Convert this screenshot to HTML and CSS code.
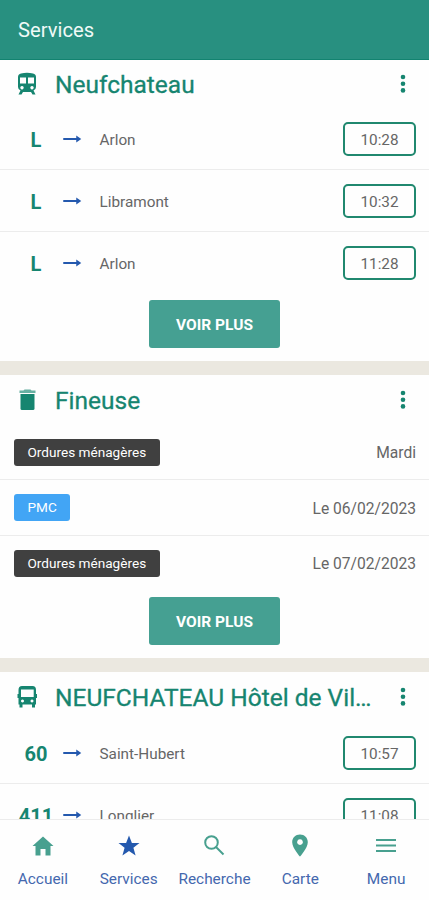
FILE: index.html
```html
<!DOCTYPE html>
<html lang="fr">
<head>
    <meta charset="UTF-8">
    <meta name="viewport" content="width=device-width, initial-scale=1.0">
    <title>Services</title>
    <link rel="stylesheet" href="styles.css">
</head>
<body>
    <!-- Header -->
    <header class="header">
        <h1>Services</h1>
    </header>

    <!-- Main Content -->
    <main class="main-content">
        <!-- Train -->
        <section class="card">
            <div class="card-header">
                <svg class="card-icon" viewBox="0 0 20 24"><path fill-rule="evenodd" d="M4 1.500Q10 0 16 1.500Q19 2 19 5V15Q19 17.500 16.500 18.500L18.500 22.500H15.500L14 20H6L4.500 22.500H1.500L3.500 18.500Q1 17.500 1 15V5Q1 2 4 1.500ZM3 5.500V11.500H9V5.500ZM11 5.500V11.500H17V5.500ZM5 14a1.700 1.700 0 1 0 .01 0ZM15 14a1.700 1.700 0 1 0 .01 0Z"/></svg>
                <h2>Neufchateau</h2>
                <svg class="more" viewBox="0 0 6 20"><circle cx="3" cy="3" r="2.300"/><circle cx="3" cy="9.700" r="2.300"/><circle cx="3" cy="16.400" r="2.300"/></svg>
            </div>
            <div class="row">
                <span class="line">L</span>
                <svg class="arrow" viewBox="0 0 18 8"><path d="M0 3H13V.5L18 4L13 7.500V5H0Z"/></svg>
                <span class="stop">Arlon</span>
                <span class="time">10:28</span>
            </div>
            <div class="row">
                <span class="line">L</span>
                <svg class="arrow" viewBox="0 0 18 8"><path d="M0 3H13V.5L18 4L13 7.500V5H0Z"/></svg>
                <span class="stop">Libramont</span>
                <span class="time">10:32</span>
            </div>
            <div class="row">
                <span class="line">L</span>
                <svg class="arrow" viewBox="0 0 18 8"><path d="M0 3H13V.5L18 4L13 7.500V5H0Z"/></svg>
                <span class="stop">Arlon</span>
                <span class="time">11:28</span>
            </div>
            <button class="btn">VOIR PLUS</button>
        </section>

        <!-- Waste collection -->
        <section class="card">
            <div class="card-header">
                <svg class="card-icon" viewBox="0 0 20 24"><path d="M3.500 6H17.500V20.500Q17.500 22 16 22H5Q3.500 22 3.500 20.500Z"/><path class="lid" d="M2.500 2.500H6.500L7.500 1.500H13.500L14.500 2.500H18.500V5H2.500Z"/></svg>
                <h2>Fineuse</h2>
                <svg class="more" viewBox="0 0 6 20"><circle cx="3" cy="3" r="2.300"/><circle cx="3" cy="9.700" r="2.300"/><circle cx="3" cy="16.400" r="2.300"/></svg>
            </div>
            <div class="row waste">
                <span class="badge">Ordures ménagères</span>
                <span class="date">Mardi</span>
            </div>
            <div class="row waste">
                <span class="badge blue">PMC</span>
                <span class="date">Le 06/02/2023</span>
            </div>
            <div class="row waste">
                <span class="badge">Ordures ménagères</span>
                <span class="date">Le 07/02/2023</span>
            </div>
            <button class="btn">VOIR PLUS</button>
        </section>

        <!-- Bus -->
        <section class="card">
            <div class="card-header">
                <svg class="card-icon" viewBox="0 0 20 24"><path fill-rule="evenodd" d="M5 1H15.500Q19 1 19 5V9H20V13H19V19.500H18V22.500H15V19.500H5.500V22.500H2.500V19.500H1.500V13H.5V9H1.500V5Q1.500 1 5 1ZM4 4.500V12H16.700V4.500ZM5.500 14.500a1.500 1.500 0 1 0 .01 0ZM15 14.500a1.500 1.500 0 1 0 .01 0Z"/></svg>
                <h2>NEUFCHATEAU Hôtel de Ville</h2>
                <svg class="more" viewBox="0 0 6 20"><circle cx="3" cy="3" r="2.300"/><circle cx="3" cy="9.700" r="2.300"/><circle cx="3" cy="16.400" r="2.300"/></svg>
            </div>
            <div class="row">
                <span class="line">60</span>
                <svg class="arrow" viewBox="0 0 18 8"><path d="M0 3H13V.5L18 4L13 7.500V5H0Z"/></svg>
                <span class="stop">Saint-Hubert</span>
                <span class="time">10:57</span>
            </div>
            <div class="row">
                <span class="line">411</span>
                <svg class="arrow" viewBox="0 0 18 8"><path d="M0 3H13V.5L18 4L13 7.500V5H0Z"/></svg>
                <span class="stop">Longlier</span>
                <span class="time">11:08</span>
            </div>
        </section>
    </main>

    <!-- Bottom Navigation -->
    <nav class="bottom-nav">
        <a class="nav-item">
            <svg viewBox="0 0 24 24"><path d="M12 2.500L22.500 12H19.500V21.500H14.500V15H9.500V21.500H4.500V12H1.500Z"/></svg>
            <span>Accueil</span>
        </a>
        <a class="nav-item active">
            <svg viewBox="0 0 24 24"><path d="M12 1.500L14.900 9H22.500L16.400 13.700L18.600 21.500L12 17L5.400 21.500L7.600 13.700L1.500 9H9.100Z"/></svg>
            <span>Services</span>
        </a>
        <a class="nav-item">
            <svg viewBox="0 0 24 24"><g class="stroke"><circle cx="9.500" cy="8.500" r="6.300"/><path d="M14 13L21.500 20.500"/></g></svg>
            <span>Recherche</span>
        </a>
        <a class="nav-item">
            <svg viewBox="0 0 24 24"><path fill-rule="evenodd" d="M12 .5C7.500 .5 4.200 3.800 4.200 8.200C4.200 14 12 22.500 12 22.500S19.800 14 19.800 8.200C19.800 3.800 16.500 .5 12 .5ZM12 5.200a2.900 2.900 0 1 0 .01 0Z"/></svg>
            <span>Carte</span>
        </a>
        <a class="nav-item">
            <svg viewBox="0 0 24 24"><g class="stroke"><path d="M2 6H22M2 11.500H22M2 17H22"/></g></svg>
            <span>Menu</span>
        </a>
    </nav>
</body>
</html>
```
FILE: styles.css
```css
/* Global Styles */
* {
    box-sizing: border-box;
    margin: 0;
    padding: 0;
    font-family: Roboto, sans-serif;
}
body {
    display: flex;
    flex-direction: column;
    height: 100vh;
    overflow: hidden;
    background-color: #fff;
}

/* Header */
.header {
    flex: none;
    display: flex;
    align-items: center;
    height: 60px;
    padding: 0 18px;
    background-color: #289080;
    border-bottom: 1px solid #128370;
    color: #f0faf7;
}
.header h1 {
    font-size: 20.200px;
    font-weight: 400;
}

/* Main Content */
.main-content {
    flex: 1;
    min-height: 0;
    overflow: hidden;
    display: flex;
    flex-direction: column;
    gap: 14px;
    background-color: #ebe8e0;
}
.card {
    flex: none;
    display: flex;
    flex-direction: column;
    padding-bottom: 13px;
    background-color: #fefefe;
}
.card-header {
    display: flex;
    align-items: center;
    height: 50px;
    padding: 0 23px 0 17px;
    color: #168570;
    fill: #168570;
}
.card:first-child .card-header {
    height: 48px;
}
.card-icon {
    flex: none;
    width: 20px;
    height: 24px;
    margin-right: 18px;
}
.lid {
    opacity: 0.65;
}
.card-header h2 {
    flex: 1;
    padding-top: 1px;
    margin-right: 27px;
    font-size: 24.500px;
    font-weight: 400;
    white-space: nowrap;
    overflow: hidden;
    text-overflow: ellipsis;
    -webkit-text-stroke: 0.3px #168570;
}
.more {
    flex: none;
    width: 6px;
    height: 20px;
}

/* Rows */
.row {
    display: flex;
    align-items: center;
    height: 62px;
    padding: 0 13px;
    border-bottom: 1px solid #ececec;
    color: #666;
    font-size: 15.300px;
}
.row:nth-child(4) {
    border-bottom: none;
}
.line {
    width: 46px;
    padding-top: 2px;
    text-align: center;
    color: #168570;
    font-size: 20px;
    font-weight: 700;
}
.arrow {
    width: 18.500px;
    height: 8px;
    margin: 0 18px 0 4px;
    fill: #2459ae;
}
.stop {
    flex: 1;
    padding-top: 2px;
}
.time {
    width: 73px;
    height: 34px;
    border: 2px solid #20886f;
    border-radius: 5px;
    text-align: center;
    line-height: 32px;
    font-size: 15.300px;
}
.waste {
    height: 55.400px;
    padding-left: 14px;
    justify-content: space-between;
}
.badge {
    height: 27px;
    padding: 0 13.500px;
    border-radius: 3px;
    background-color: #404040;
    color: #fff;
    font-size: 13.600px;
    line-height: 27px;
}
.badge.blue {
    background-color: #42a5f5;
}
.date {
    padding-top: 2px;
    font-size: 15.600px;
}
.btn {
    align-self: center;
    width: 131px;
    height: 48px;
    padding-top: 2px;
    margin-top: 6px;
    border: none;
    border-radius: 3px;
    background-color: #45a092;
    color: #fff;
    font-size: 15.500px;
    font-weight: 700;
}

/* Bottom Navigation */
.bottom-nav {
    flex: none;
    display: flex;
    height: 81px;
    border-top: 1px solid #ececec;
    background-color: #fefefe;
}
.nav-item {
    flex: 1;
    display: flex;
    flex-direction: column;
    align-items: center;
    padding-top: 14px;
    gap: 12px;
    color: #4468ae;
    fill: #48a08f;
    font-size: 15.400px;
    line-height: 19px;
}
.nav-item svg {
    width: 24px;
    height: 24px;
}
.nav-item.active {
    fill: #2459ae;
}
.stroke {
    fill: none;
    stroke: #48a08f;
    stroke-width: 2;
}
```
